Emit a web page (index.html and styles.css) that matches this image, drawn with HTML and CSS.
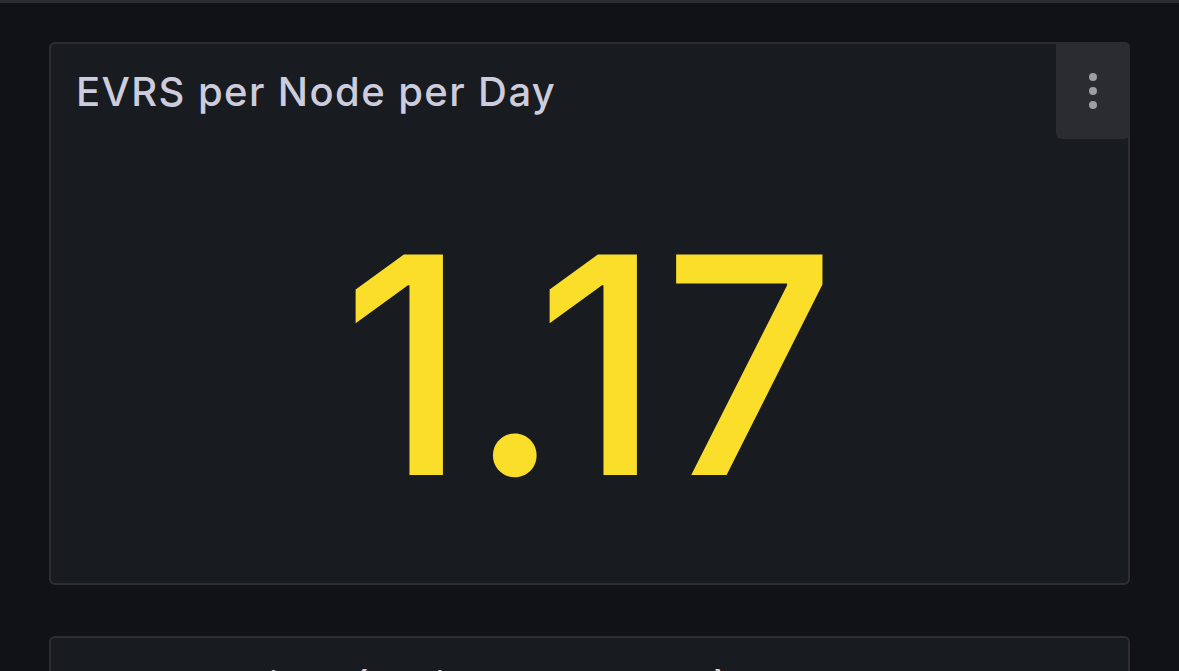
FILE: index.html
```html
<!DOCTYPE html>
<html>
<head>
<meta charset="utf-8">
<link rel="stylesheet" href="styles.css">
</head>
<body>
<div class="topbar"></div>
<main class="dashboard">
  <section class="panel panel-stat">
    <header class="panel-header">
      <h2 class="panel-title">EVRS per Node per Day</h2>
      <button class="menu-btn" aria-label="Menu">
        <svg width="12" height="40" viewBox="0 0 12 40">
          <circle cx="6" cy="6" r="4" fill="#9c9ea6"/>
          <circle cx="6" cy="20" r="4" fill="#9c9ea6"/>
          <circle cx="6" cy="34" r="4" fill="#9c9ea6"/>
        </svg>
      </button>
    </header>
    <div class="panel-body">
      <span class="stat-value">1.17</span>
    </div>
  </section>
  <section class="panel panel-next">
    <header class="panel-header">
      <h2 class="panel-title">Node Uptime (rolling 7-day avg)</h2>
    </header>
  </section>
</main>
</body>
</html>
```
FILE: styles.css
```css
html, body {
  margin: 0;
  padding: 0;
  background: #111217;
  height: 100%;
  overflow: hidden;
  font-family: Inter, "Noto Sans", sans-serif;
}
.topbar {
  height: 3px;
  background: #2b2c31;
}
.dashboard {
  display: flex;
  flex-direction: column;
  gap: 51px;
  padding: 39px 49px 0 49px;
}
.panel {
  background: #181b1f;
  border: 2px solid #2c2e33;
  border-radius: 6px;
  box-sizing: border-box;
  display: flex;
  flex-direction: column;
}
.panel-stat {
  height: 543px;
}
.panel-next {
  height: 300px;
}
.panel-header {
  height: 95px;
  display: flex;
  align-items: center;
  justify-content: space-between;
  padding-left: 25px;
}
.panel-title {
  margin: 0;
  font-size: 40px;
  font-weight: 500;
  color: #ccccdc;
  line-height: 46px;
  letter-spacing: 1.4px;
}
.menu-btn {
  align-self: flex-start;
  border: none;
  padding: 0;
  background: #2a2c31;
  border-radius: 0 5px 6px 6px;
  display: flex;
  align-items: center;
  justify-content: center;
  margin-top: -2px;
  margin-right: -2px;
  width: 74px;
  height: 97px;
}
.menu-btn svg {
  display: block;
}
.panel-body {
  flex: 1;
  display: flex;
  align-items: center;
  justify-content: center;
  padding-top: 6px;
}
.stat-value {
  font-size: 303px;
  font-weight: 500;
  line-height: 1;
  color: #fade2a;
  letter-spacing: 1.5px;
}
```
